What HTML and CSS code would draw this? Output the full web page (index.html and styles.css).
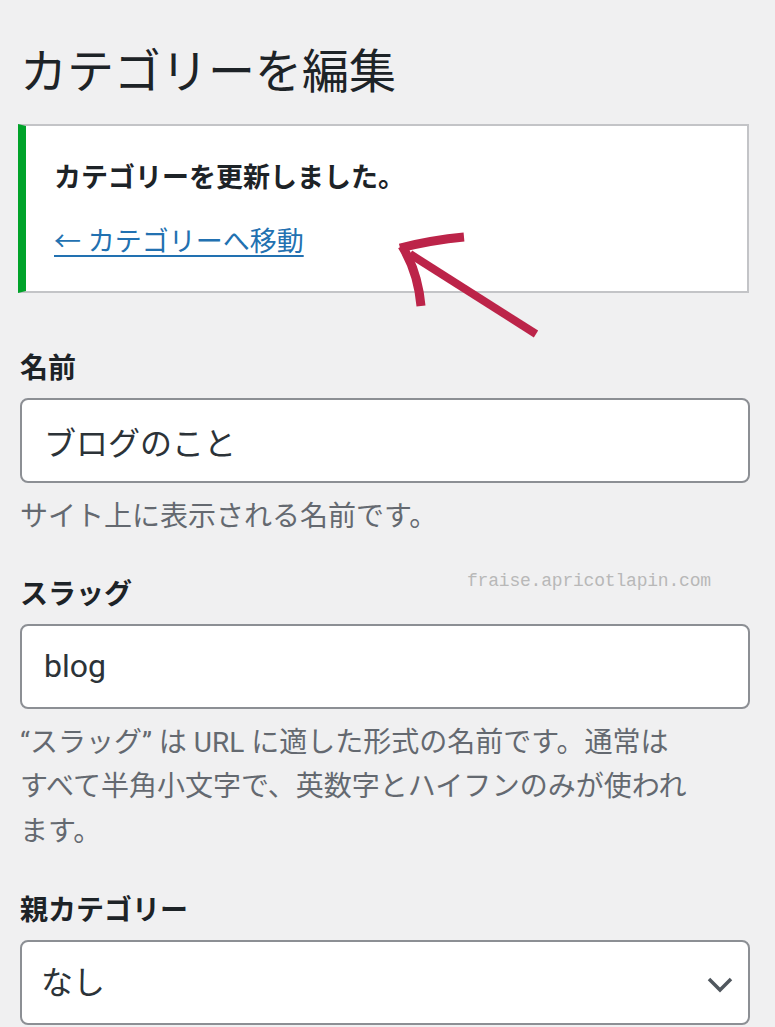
FILE: index.html
```html
<!DOCTYPE html>
<html lang="ja">
<head>
    <meta charset="UTF-8">
    <meta name="viewport" content="width=device-width, initial-scale=1.0">
    <title>カテゴリーを編集</title>
    <link rel="stylesheet" href="styles.css">
</head>
<body>
    <div class="page">
        <h1>カテゴリーを編集</h1>

        <div class="notice">
            <p class="notice-title">カテゴリーを更新しました。</p>
            <p><a href="#">← カテゴリーへ移動</a></p>
        </div>

        <div class="field">
            <label for="name">名前</label>
            <input type="text" id="name" value="ブログのこと">
            <p class="description">サイト上に表示される名前です。</p>
        </div>

        <div class="field">
            <label for="slug">スラッグ</label>
            <input type="text" id="slug" value="blog">
            <p class="description">“スラッグ” は URL に適した形式の名前です。通常はすべて半角小文字で、英数字とハイフンのみが使われます。</p>
        </div>

        <div class="field field-parent">
            <label for="parent">親カテゴリー</label>
            <div class="select-wrap">
                <select id="parent">
                    <option>なし</option>
                </select>
                <svg class="chevron" width="26" height="16" viewBox="0 0 26 16">
                    <path d="M2 2 L13 13 L24 2" fill="none" stroke="#50575e" stroke-width="3.5"/>
                </svg>
            </div>
        </div>

        <!-- annotation overlay -->
        <span class="watermark">fraise.apricotlapin.com</span>
        <svg class="arrow" width="160" height="120" viewBox="390 230 160 120">
            <path d="M536 334 L410 254" fill="none" stroke="#bc2449" stroke-width="8"/>
            <path d="M400 248 Q432 240 464 237" fill="none" stroke="#bc2449" stroke-width="9"/>
            <path d="M402 246 Q418 272 421 306" fill="none" stroke="#bc2449" stroke-width="9"/>
        </svg>
    </div>
</body>
</html>
```

FILE: styles.css
```css
body {
    margin: 0;
    background-color: #f0f0f1;
    color: #1d2327;
    font-family: Roboto, "Noto Sans CJK JP", sans-serif;
}

.page {
    position: relative;
    padding: 42px 25px 0 20px;
}

h1 {
    margin: 0 0 22px;
    font-size: 47px;
    line-height: 60px;
    font-weight: 400;
}

.notice {
    margin: 0 1px 0 -2px;
    background-color: #ffffff;
    border: 2px solid #c3c4c7;
    border-left: 8px solid #00a32a;
    padding: 32px 28px 29px 28px;
}

.notice p {
    margin: 0;
    font-size: 27px;
    line-height: 40px;
}

.notice .notice-title {
    font-weight: 700;
    margin-bottom: 24px;
}

.notice a {
    color: #2271b1;
    text-decoration: underline;
    text-underline-offset: 4px;
    text-decoration-thickness: 2px;
}

.field {
    margin-top: 35px;
}

.notice + .field {
    margin-top: 56px;
}

.field-parent {
    margin-top: 37px;
}

label {
    display: block;
    font-size: 28px;
    line-height: 40px;
    font-weight: 700;
    margin-bottom: 9px;
}

input[type="text"],
select {
    display: block;
    width: 100%;
    height: 85px;
    box-sizing: border-box;
    margin: 0;
    padding: 0 22px;
    border: 2px solid #8c8f94;
    border-radius: 8px;
    background-color: #ffffff;
    color: #2c3338;
    font-family: Roboto, "Noto Sans CJK JP", sans-serif;
    font-size: 32px;
}

select {
    padding-left: 19px;
    appearance: none;
    -webkit-appearance: none;
}

.select-wrap {
    position: relative;
}

.chevron {
    position: absolute;
    right: 17px;
    top: 37px;
}

.description {
    margin: 12px 0 0;
    max-width: 674px;
    color: #646970;
    font-size: 28px;
    line-height: 44.5px;
}

.watermark {
    position: absolute;
    left: 467px;
    top: 571px;
    color: #b8b8b8;
    font-family: "Liberation Mono", monospace;
    font-size: 18px;
    letter-spacing: -0.2px;
}

.arrow {
    position: absolute;
    left: 390px;
    top: 230px;
}
```
